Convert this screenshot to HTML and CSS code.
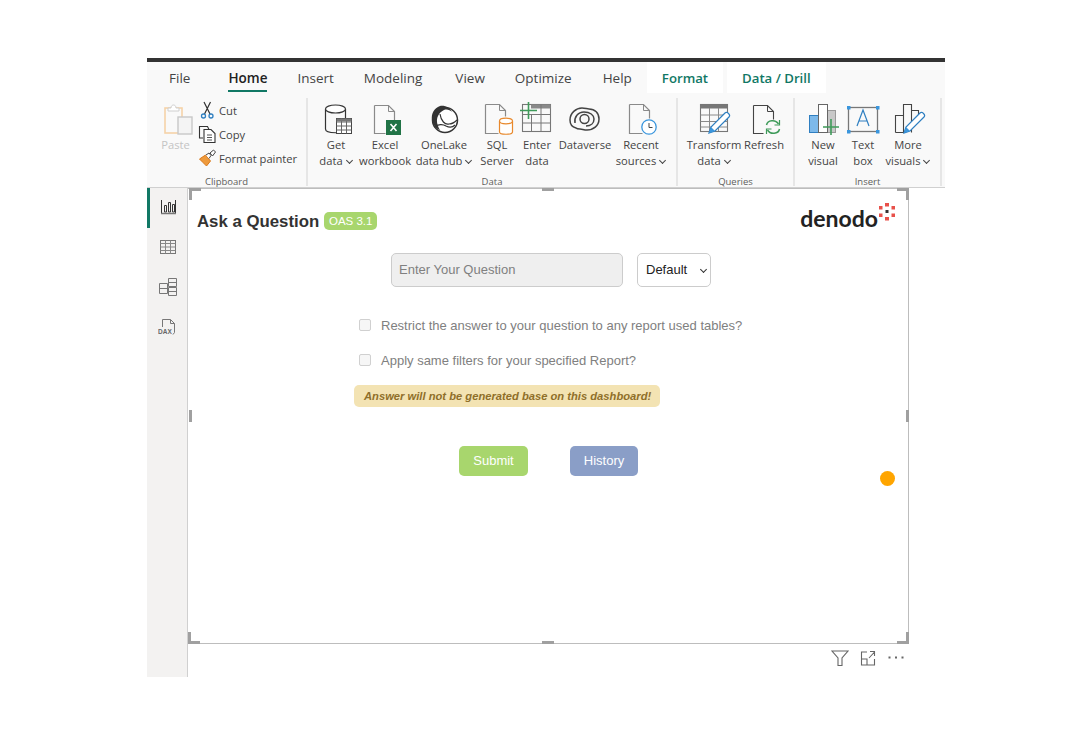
FILE: index.html
```html
<!DOCTYPE html>
<html lang="en">
<head>
    <meta charset="UTF-8">
    <title>Ask a Question</title>
    <link rel="stylesheet" href="styles.css">
</head>
<body>
<div class="app">
    <!-- tabs -->
    <div class="tabs">
        <span class="tab tab-file">File</span>
        <span class="tab tab-home">Home</span>
        <span class="tab tab-insert">Insert</span>
        <span class="tab tab-modeling">Modeling</span>
        <span class="tab tab-view">View</span>
        <span class="tab tab-optimize">Optimize</span>
        <span class="tab tab-help">Help</span>
        <span class="tab tab-ctx tab-format">Format</span>
        <span class="tab tab-ctx">Data / Drill</span>
    </div>

    <!-- ribbon -->
    <div class="ribbon">
        <div class="group group-clipboard">
            <div class="group-body">
                <div class="tool tool-paste">
                    <svg class="ico" width="36" height="36" viewBox="0 0 36 36">
                        <rect x="7" y="8" width="17" height="25" stroke="#f6d3a8" stroke-width="1.6"/>
                        <path d="M10 8h3c0-4 5-4 5 0h3v3H10z" stroke="#cfcfcf" fill="#fff"/>
                        <rect x="20" y="17" width="14" height="17" stroke="#c8c8c8" stroke-width="1.4" fill="#f4f4f4"/>
                    </svg>
                    <span class="tool-label faded">Paste</span>
                </div>
                <div class="small-tools">
                    <div class="small-tool">
                        <svg class="ico" width="20" height="20" viewBox="0 0 20 20">
                            <path d="M6 2l6 12M12.500 2L6.500 14" stroke="#333" stroke-width="1.2"/>
                            <circle cx="5.500" cy="16" r="2" stroke="#2f7fc1" stroke-width="1.3"/>
                            <circle cx="13" cy="16" r="2" stroke="#2f7fc1" stroke-width="1.3"/>
                        </svg>
                        <span>Cut</span>
                    </div>
                    <div class="small-tool">
                        <svg class="ico" width="20" height="20" viewBox="0 0 20 20">
                            <path d="M5 14H1.500V2.500h8l1.500 3" stroke="#333" stroke-width="1.1"/>
                            <path d="M6 5.500h7l4 4v9H6z" stroke="#333" stroke-width="1.1" fill="#fff"/>
                            <path d="M9 11h5M9 13.500h5M9 16h5" stroke="#555"/>
                        </svg>
                        <span>Copy</span>
                    </div>
                    <div class="small-tool">
                        <svg class="ico" width="20" height="20" viewBox="0 0 20 20">
                            <path d="M1.500 11l6-4 5 6-4 5c-2-2-5-5-7-7z" fill="#ee9a3c" stroke="#d9791c"/>
                            <path d="M8 7l3-2 2 2.500-2 3" stroke="#444" fill="#fff"/>
                            <path d="M12 5l3.500-3 2 2-3 4z" stroke="#444" fill="#fff"/>
                        </svg>
                        <span>Format painter</span>
                    </div>
                </div>
            </div>
            <div class="group-name">Clipboard</div>
        </div>

        <div class="group group-data">
            <div class="group-body">
                <div class="tool">
                    <svg class="ico" width="36" height="36" viewBox="0 0 36 36">
                        <path d="M7.500 9v20c0 5 20 5 20 0V9" stroke="#333" stroke-width="1.2"/>
                        <ellipse cx="17.500" cy="9" rx="10" ry="4" stroke="#333" stroke-width="1.2" fill="#fff"/>
                        <rect x="18.500" y="18.500" width="15" height="15" stroke="#444" fill="#fff"/>
                        <path d="M18.500 22h15M18.500 26h15M18.500 30h15M23.500 18.500v15M28.500 18.500v15" stroke="#666"/>
                        <rect x="18.500" y="18.500" width="15" height="3" fill="#777"/>
                    </svg>
                    <span class="tool-label">Get</span>
                    <span class="tool-label">data<i class="chev"></i></span>
                </div>
                <div class="tool">
                    <svg class="ico" width="36" height="36" viewBox="0 0 36 36">
                        <path d="M7.500 5.500h14l6 6v10M7.500 5.500v28h11" stroke="#8a8a8a" stroke-width="1.2"/>
                        <path d="M21.500 5.500v6h6" stroke="#8a8a8a"/>
                        <rect x="19" y="20" width="15" height="15" fill="#217346"/>
                        <path d="M23.500 24l6 7M29.500 24l-6 7" stroke="#fff" stroke-width="1.600"/>
                    </svg>
                    <span class="tool-label">Excel</span>
                    <span class="tool-label">workbook</span>
                </div>
                <div class="tool">
                    <svg class="ico" width="36" height="36" viewBox="0 0 36 36">
                        <circle cx="19" cy="20" r="12.500" stroke="#333" stroke-width="1.5" fill="#fff"/>
                        <path d="M14 6c-6 2-9 8-8 14 1 5 4 9 8 10-3-5-4-10-2-14 1-3 4-5 6-6 3-1 6 0 8 2-2-4-7-7-12-6z" fill="#333"/>
                        <path d="M14 14c1 7 5 11 9 10 3 0 6-2 8-4M8 27c4-3 9-3 12-1 4 2 7 1 9-1" stroke="#333" stroke-width="1.200"/>
                    </svg>
                    <span class="tool-label">OneLake</span>
                    <span class="tool-label">data hub<i class="chev"></i></span>
                </div>
                <div class="tool">
                    <svg class="ico" width="36" height="36" viewBox="0 0 36 36">
                        <path d="M6.500 4.500h14l6 6v6M6.500 4.500v29h13" stroke="#8a8a8a" stroke-width="1.2"/>
                        <path d="M20.500 4.500v6h6" stroke="#8a8a8a"/>
                        <path d="M20.500 21v11c0 3 13 3 13 0V21" stroke="#e8892d" stroke-width="1.2" fill="#fff"/>
                        <ellipse cx="27" cy="21" rx="6.500" ry="2.800" stroke="#e8892d" stroke-width="1.2" fill="#fff"/>
                    </svg>
                    <span class="tool-label">SQL</span>
                    <span class="tool-label">Server</span>
                </div>
                <div class="tool">
                    <svg class="ico" width="36" height="36" viewBox="0 0 36 36">
                        <rect x="3.500" y="4.500" width="28" height="27" stroke="#777" stroke-width="1.1"/>
                        <rect x="12" y="4.500" width="19.500" height="4" fill="#8a8a8a"/>
                        <path d="M3.500 14.500h28M3.500 23h28M12.500 14v17M22 4.500v27" stroke="#777"/>
                        <path d="M9.500 2v17M1 10.500h17" stroke="#3f9b5a" stroke-width="1.600"/>
                    </svg>
                    <span class="tool-label">Enter</span>
                    <span class="tool-label">data</span>
                </div>
                <div class="tool">
                    <svg class="ico" width="36" height="36" viewBox="0 0 36 36">
                        <path d="M9 28c-4-1-6-4-6-8 0-7 6-12 12-12 3 0 5 1 7 1 6 0 10 4 10 10 0 7-6 11-12 11-3 0-5-1-7-1-1 0-3 0-4-1z" stroke="#444" stroke-width="1.500"/>
                        <path d="M8 23c-1-6 3-11 9-11 6 0 10 3 10 7 0 4-3 7-8 7" stroke="#444" stroke-width="1.500"/>
                        <circle cx="17.500" cy="19" r="4.500" stroke="#444" stroke-width="1.500"/>
                    </svg>
                    <span class="tool-label">Dataverse</span>
                </div>
                <div class="tool">
                    <svg class="ico" width="36" height="36" viewBox="0 0 36 36">
                        <path d="M6.500 4.500h14l6 6v8M6.500 4.500v29h13" stroke="#8a8a8a" stroke-width="1.2"/>
                        <path d="M20.500 4.500v6h6" stroke="#8a8a8a"/>
                        <circle cx="26" cy="27" r="7.200" stroke="#3a96dd" stroke-width="1.3" fill="#fff"/>
                        <path d="M26 23v4.500h3.500" stroke="#444"/>
                    </svg>
                    <span class="tool-label">Recent</span>
                    <span class="tool-label">sources<i class="chev"></i></span>
                </div>
            </div>
            <div class="group-name">Data</div>
        </div>

        <div class="group group-queries">
            <div class="group-body">
                <div class="tool">
                    <svg class="ico" width="36" height="36" viewBox="0 0 36 36">
                        <rect x="4.500" y="4.500" width="27" height="27" stroke="#777" stroke-width="1.1"/>
                        <rect x="4.500" y="4.500" width="27" height="4" fill="#777"/>
                        <path d="M4.500 15h27M4.500 21.500h27M4.500 27h27M13.500 8v23M22.500 8v23" stroke="#8a8a8a"/>
                        <path d="M13 33l2-6L29 13c2-2 6 2 4 4L19 31z" stroke="#2f7fc1" stroke-width="1.200" fill="#fff"/>
                        <path d="M13 33l2-6 4 4z" fill="#3a96dd"/>
                    </svg>
                    <span class="tool-label">Transform</span>
                    <span class="tool-label">data<i class="chev"></i></span>
                </div>
                <div class="tool">
                    <svg class="ico" width="36" height="36" viewBox="0 0 36 36">
                        <path d="M7.500 5.500h14l6 6v8M7.500 5.500v28h10" stroke="#444" stroke-width="1.1"/>
                        <path d="M21.500 5.500v6h6" stroke="#444"/>
                        <path d="M20.500 25c1-5 9-6 12-1M33.500 29c-1 5-9 6-12 1" stroke="#3f9b5a" stroke-width="1.500"/>
                        <path d="M33.500 20v5h-5M20.500 34v-5h5" stroke="#3f9b5a" stroke-width="1.200"/>
                    </svg>
                    <span class="tool-label">Refresh</span>
                </div>
            </div>
            <div class="group-name">Queries</div>
        </div>

        <div class="group group-insert">
            <div class="group-body">
                <div class="tool">
                    <svg class="ico" width="36" height="36" viewBox="0 0 36 36">
                        <rect x="4.500" y="15.500" width="9" height="17" stroke="#2f7fc1" fill="#7db9ea"/>
                        <rect x="22" y="10.500" width="8.500" height="22" stroke="#999" fill="#c8c8c8"/>
                        <rect x="13.500" y="4.500" width="9" height="28" stroke="#666" fill="#fff"/>
                        <path d="M26 19v16M18 27h16" stroke="#3f9b5a" stroke-width="1.600"/>
                    </svg>
                    <span class="tool-label">New</span>
                    <span class="tool-label">visual</span>
                </div>
                <div class="tool">
                    <svg class="ico" width="36" height="36" viewBox="0 0 36 36">
                        <rect x="3.500" y="7.500" width="29" height="24" stroke="#777" stroke-width="1.300"/>
                        <path d="M12 26l6-16 6 16M14 21h8" stroke="#2f7fc1" stroke-width="1.200"/>
                        <g fill="#3a96dd">
                            <rect x="2" y="6" width="3.500" height="3.500"/>
                            <rect x="31" y="6" width="3.500" height="3.500"/>
                            <rect x="2" y="30" width="3.500" height="3.500"/>
                            <rect x="31" y="30" width="3.500" height="3.500"/>
                        </g>
                    </svg>
                    <span class="tool-label">Text</span>
                    <span class="tool-label">box</span>
                </div>
                <div class="tool">
                    <svg class="ico" width="36" height="36" viewBox="0 0 36 36">
                        <path d="M5.500 32.500v-17h8M13.500 32.500V4.500h8v28M21.500 10.500h7v6M5.500 32.500h10" stroke="#444" stroke-width="1.100"/>
                        <path d="M14 33l2-6L30 13c2-2 6 2 4 4L20 31z" stroke="#2f7fc1" stroke-width="1.200" fill="#fff"/>
                        <path d="M14 33l2-6 4 4z" fill="#3a96dd"/>
                    </svg>
                    <span class="tool-label">More</span>
                    <span class="tool-label">visuals<i class="chev"></i></span>
                </div>
            </div>
            <div class="group-name">Insert</div>
        </div>
    </div>

    <div class="main">
        <!-- left rail -->
        <div class="rail">
            <div class="rail-item active">
                <svg class="ico" width="20" height="20" viewBox="0 0 20 20">
                    <path d="M3.500 3v13M6.500 8.500h2V15h-2zM10.500 5.500h2V15h-2zM14.500 7.500h2V15h-2zM17.500 3v13" stroke="#333"/>
                    <path d="M3 16.500h15" stroke="#777" stroke-width="1.500"/>
                </svg>
            </div>
            <div class="rail-item">
                <svg class="ico" width="20" height="20" viewBox="0 0 20 20">
                    <rect x="2.500" y="3.500" width="15" height="13" stroke="#777"/>
                    <path d="M2.500 6.500h15M2.500 10h15M2.500 13.500h15M7.500 3.500v13M12.500 3.500v13" stroke="#888"/>
                </svg>
            </div>
            <div class="rail-item">
                <svg class="ico" width="20" height="20" viewBox="0 0 20 20">
                    <path d="M1.500 6.500h8v10h-8zM1.500 11.500h8M10.500 1.500h8v8h-8zM10.500 5.500h8M10.500 10.500h8v8h-8zM10.500 14.500h8" stroke="#777"/>
                </svg>
            </div>
            <div class="rail-item">
                <svg class="ico" width="20" height="20" viewBox="0 0 20 20">
                    <path d="M4.500 10V2.500h8l4 4v9l-1.500 2M12.500 2.500v4h4" stroke="#777"/>
                    <text class="dax-text" x="0" y="16.500">DAX</text>
                </svg>
            </div>
        </div>

        <div class="stage">
            <div class="visual">
                <i class="handle h-tl"></i>
                <i class="handle h-tr"></i>
                <i class="handle h-bl"></i>
                <i class="handle h-br"></i>
                <i class="handle h-top"></i>
                <i class="handle h-bottom"></i>
                <i class="handle h-left"></i>
                <i class="handle h-right"></i>

                <div class="visual-head">
                    <div class="title-wrap">
                        <h1 class="title">Ask a Question</h1>
                        <span class="badge">OAS 3.1</span>
                    </div>
                    <div class="logo">
                        <span class="logo-text">denodo</span>
                        <svg class="logo-dots" width="18" height="18" viewBox="0 0 18 18">
                            <g fill="#e8514a">
                                <rect x="7" y="0" width="4" height="3.500"/>
                                <rect x="1" y="3" width="3.500" height="3.500"/>
                                <rect x="13.500" y="3" width="3.500" height="3.500"/>
                                <rect x="1" y="10.500" width="3.500" height="3.500"/>
                                <rect x="13.500" y="10.500" width="3.500" height="3.500"/>
                                <rect x="7" y="14" width="4" height="3.500"/>
                            </g>
                            <rect x="7.500" y="7" width="3" height="3" fill="#333"/>
                        </svg>
                    </div>
                </div>

                <form class="ask-form">
                    <div class="question-row">
                        <input class="question" type="text" placeholder="Enter Your Question" disabled>
                        <div class="mode-wrap">
                            <select class="mode">
                                <option>Default</option>
                            </select>
                        </div>
                    </div>
                    <label class="check-row"><input type="checkbox" disabled>Restrict the answer to your question to any report used tables?</label>
                    <label class="check-row"><input type="checkbox" disabled>Apply same filters for your specified Report?</label>
                    <div class="warning">Answer will not be generated base on this dashboard!</div>
                    <div class="buttons">
                        <button class="btn btn-submit" type="button">Submit</button>
                        <button class="btn btn-history" type="button">History</button>
                    </div>
                </form>

                <span class="status-dot"></span>
            </div>

            <div class="visual-foot">
                <svg class="ico" width="18" height="18" viewBox="0 0 18 18">
                    <path d="M1 2h16l-6 7v7.500H7V9z" stroke="#666" stroke-width="1.100"/>
                </svg>
                <svg class="ico" width="18" height="18" viewBox="0 0 18 18">
                    <path d="M8 3H2.500v13h13v-6M2.500 10H8v6M10 9l5.500-6M11 2.500h4.500V7" stroke="#666" stroke-width="1.100"/>
                </svg>
                <svg class="ico" width="18" height="18" viewBox="0 0 18 18">
                    <g fill="#666">
                        <rect x="1.500" y="7.500" width="2" height="2"/>
                        <rect x="8" y="7.500" width="2" height="2"/>
                        <rect x="14.500" y="7.500" width="2" height="2"/>
                    </g>
                </svg>
            </div>
        </div>
    </div>
</div>
</body>
</html>
```

FILE: styles.css
```css
body {
    margin: 0;
    background-color: #fff;
    font-family: "Liberation Sans", Arial, sans-serif;
}

.app {
    width: 798px;
    height: 619px;
    margin: 58px 0 0 147px;
    border-top: 4px solid #333;
    box-sizing: border-box;
    display: flex;
    flex-direction: column;
}

.ico {
    display: block;
    fill: none;
    flex: none;
}

/* Tabs */
.tabs {
    height: 31px;
    padding-left: 22px;
    display: flex;
    align-items: stretch;
    background-color: #f9f9f9;
    font-family: "Open Sans", sans-serif;
    font-size: 13.5px;
    color: #444;
}

.tab {
    display: flex;
    align-items: center;
    white-space: nowrap;
}

.tab-file { margin-right: 38px; }
.tab-insert { margin-right: 30px; }
.tab-modeling { margin-right: 33px; }
.tab-view { margin-right: 30px; }
.tab-optimize { margin-right: 31px; }
.tab-help { margin-right: 15px; }

.tab-home {
    margin-right: 30px;
    color: #222;
    font-weight: 600;
    border-bottom: 2px solid #117865;
    margin-bottom: 1px;
    padding-top: 3px;
    box-sizing: border-box;
}

.tab-ctx {
    padding: 0 15px;
    background-color: #fff;
    color: #117865;
    font-size: 13.2px;
    font-weight: 550;
}

.tab-format { margin-right: 4px; }

/* Ribbon */
.ribbon {
    height: 95px;
    display: flex;
    box-sizing: border-box;
    background-color: #f9f9f9;
    border-bottom: 1px solid #d0d0d0;
    font-family: "Open Sans", sans-serif;
    font-size: 11.2px;
    color: #444;
}

.group {
    border-right: 2px solid #e6e6e6;
    margin: 5px 0 1px;
    display: flex;
    flex-direction: column;
    box-sizing: border-box;
}

.group-clipboard { width: 161px; }
.group-data { width: 370px; }
.group-queries { width: 117px; }
.group-insert { width: 147px; }

.group-body {
    flex: 1;
    min-height: 0;
    display: grid;
    align-items: start;
}

.group-clipboard .group-body { grid-template-columns: 45px auto; padding-left: 6px; }
.group-data .group-body { grid-template-columns: 48px 50px 68px 38px 42px 54px 58px; padding-left: 4px; }
.group-queries .group-body { grid-template-columns: 60px 40px; padding-left: 6px; }
.group-insert .group-body { grid-template-columns: 40px 40px 50px; padding-left: 8px; }

.group-name {
    flex: none;
    height: 17px;
    padding-top: 7px;
    box-sizing: border-box;
    text-align: center;
    font-size: 9.5px;
    line-height: 12px;
    color: #605e5c;
}

.tool {
    display: flex;
    flex-direction: column;
    align-items: center;
    min-width: 0;
    padding-top: 2px;
}

.tool .ico { margin-bottom: 1px; }

.tool-label {
    height: 16px;
    line-height: 16px;
    white-space: nowrap;
}

.faded { color: #c4c4c4; }

.chev {
    display: inline-block;
    width: 4px;
    height: 4px;
    margin: 0 1px 2px 4px;
    border-right: 1px solid #444;
    border-bottom: 1px solid #444;
    transform: rotate(45deg);
}

.small-tools {
    display: flex;
    flex-direction: column;
}

.small-tool {
    height: 24px;
    display: flex;
    align-items: center;
    gap: 1px;
    white-space: nowrap;
}

/* Main area */
.main {
    flex: 1;
    display: flex;
    min-height: 0;
}

.rail {
    width: 41px;
    box-sizing: border-box;
    background-color: #f3f2f1;
    border-right: 1px solid #d0d0d0;
}

.rail-item {
    height: 40px;
    padding: 0 0 2px 2px;
    box-sizing: border-box;
    display: flex;
    align-items: center;
    justify-content: center;
}

.rail-item.active { box-shadow: inset 3px 0 0 #117865; }

.dax-text {
    font-family: "Liberation Sans", sans-serif;
    font-size: 6.5px;
    font-weight: bold;
    fill: #666;
}

.stage {
    width: 721px;
    display: flex;
    flex-direction: column;
}

.visual {
    position: relative;
    height: 456px;
    box-sizing: border-box;
    border-right: 1px solid #bdbdbd;
    border-bottom: 1px solid #bdbdbd;
    border-top: 1px solid #bdbdbd;
}

.handle {
    position: absolute;
    background-color: #a0a0a0;
}

.h-top { top: -1px; left: 354px; width: 12px; height: 3px; }
.h-bottom { bottom: -1px; left: 354px; width: 12px; height: 3px; }
.h-left { top: 221px; left: 1px; width: 3px; height: 12px; }
.h-right { top: 221px; right: -1px; width: 3px; height: 12px; }

.h-tl, .h-tr, .h-bl, .h-br {
    width: 9px;
    height: 9px;
    background: none;
    border: 0 solid #a0a0a0;
}

.h-tl { top: -1px; left: 1px; border-width: 3px 0 0 3px; }
.h-tr { top: -1px; right: -1px; border-width: 3px 3px 0 0; }
.h-bl { bottom: -1px; left: 0; border-width: 0 0 3px 3px; }
.h-br { bottom: -1px; right: -1px; border-width: 0 3px 3px 0; }

.visual-head {
    height: 64px;
    padding: 0 12px 0 9px;
    display: flex;
    align-items: center;
    justify-content: space-between;
}

.title-wrap {
    display: flex;
    align-items: center;
    gap: 5px;
}

.title {
    margin: 0;
    padding-top: 2px;
    font-size: 16.8px;
    font-weight: bold;
    color: #333;
}

.badge {
    width: 53px;
    height: 18px;
    border-radius: 5px;
    background-color: #a8d66d;
    color: #fff;
    font-size: 11.5px;
    line-height: 18px;
    text-align: center;
}

.logo {
    display: flex;
    align-items: flex-start;
    margin-top: -8px;
}

.logo-text {
    font-family: Lato, sans-serif;
    font-size: 23px;
    font-weight: 700;
    line-height: 28px;
    margin-top: 1px;
    color: #222;
}

.question-row {
    display: flex;
    gap: 14px;
    margin-left: 203px;
}

.question {
    width: 232px;
    height: 34px;
    box-sizing: border-box;
    padding: 0 7px 2px;
    border: 1px solid #ccc;
    border-radius: 5px;
    background-color: #efefef;
    font-family: "Liberation Sans", sans-serif;
    font-size: 13px;
}

.question::placeholder { color: #808080; }

.mode-wrap {
    position: relative;
}

/* chevron sits over the select */
.mode-wrap::after {
    content: "";
    position: absolute;
    top: 14px;
    right: 5px;
    width: 4px;
    height: 4px;
    border-right: 1px solid #333;
    border-bottom: 1px solid #333;
    transform: rotate(45deg);
}

.mode {
    appearance: none;
    display: block;
    width: 74px;
    height: 34px;
    box-sizing: border-box;
    padding: 0 0 2px 8px;
    border: 1px solid #ccc;
    border-radius: 5px;
    background-color: #fff;
    color: #222;
    font-family: "Liberation Sans", sans-serif;
    font-size: 13px;
}

.check-row {
    height: 20px;
    margin: 15px 0 0 171px;
    display: flex;
    align-items: center;
    gap: 10px;
    font-size: 13px;
    color: #808080;
}

.question-row + .check-row { margin-top: 28px; }

.check-row input {
    appearance: none;
    width: 12px;
    height: 12px;
    margin: 0;
    border: 1px solid #d0d0d0;
    border-radius: 2px;
    background-color: #f6f6f6;
}

.warning {
    width: 306px;
    height: 22px;
    margin: 15px 0 0 166px;
    box-sizing: border-box;
    padding-left: 10px;
    border-radius: 5px;
    background-color: #f3e3b3;
    color: #8f6f2a;
    font-size: 11.2px;
    font-style: italic;
    font-weight: bold;
    line-height: 22px;
    white-space: nowrap;
}

.buttons {
    margin: 39px 0 0 271px;
    display: flex;
    gap: 42px;
}

.btn {
    width: 69px;
    height: 30px;
    padding-bottom: 2px;
    border: none;
    border-radius: 5px;
    color: #fff;
    font-family: "Liberation Sans", sans-serif;
    font-size: 13px;
}

.btn-submit { background-color: #a8d66d; }
.btn-history { width: 68px; background-color: #8a9ec7; }

.status-dot {
    position: absolute;
    top: 282px;
    left: 692px;
    width: 15px;
    height: 15px;
    border-radius: 50%;
    background-color: #ffa500;
}

.visual-foot {
    margin-top: 5px;
    padding-right: 4px;
    display: flex;
    justify-content: flex-end;
    gap: 10px;
}
```
